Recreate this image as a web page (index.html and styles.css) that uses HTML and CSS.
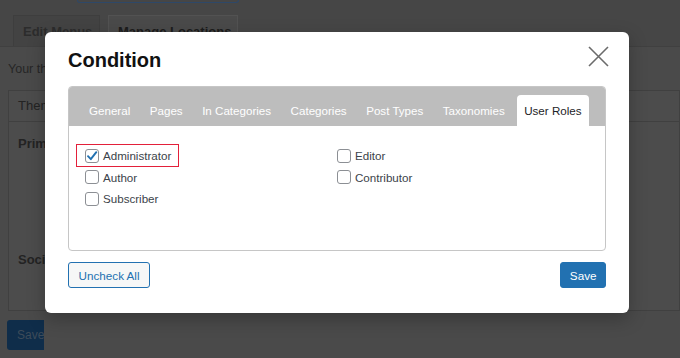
FILE: index.html
```html
<!DOCTYPE html>
<html lang="en">
  <head>
    <meta charset="UTF-8" />
    <meta name="viewport" content="width=device-width, initial-scale=1.0" />
    <title>Menus - Condition</title>
    <link rel="stylesheet" href="styles.css">
  </head>
  <body>
    <div class="page">
      <div class="page_top">
        <div class="top_button"></div>
        <div class="nav_tabs">
          <span class="nav_tab">Edit Menus</span>
          <span class="nav_tab nav_tab_active">Manage Locations</span>
        </div>
      </div>
      <p class="page_intro">Your theme supports 2 menus.</p>
      <div class="locations">
        <div class="locations_head">Theme Location</div>
        <div class="locations_body">
          <div class="location_name">Primary</div>
          <div class="location_name">Social Menu</div>
        </div>
      </div>
      <button class="page_save">Save</button>
    </div>

    <div class="modal">
      <div class="modal_head">
        <h2>Condition</h2>
        <button class="modal_close" aria-label="Close">
          <svg width="21" height="21" viewBox="0 0 21 21">
            <path d="M1 1 L20 20 M20 1 L1 20" stroke="#6b6b6b" stroke-width="1.6" fill="none" />
          </svg>
        </button>
      </div>

      <div class="tabs_box">
        <ul class="tabs">
          <li>General</li>
          <li>Pages</li>
          <li>In Categories</li>
          <li>Categories</li>
          <li>Post Types</li>
          <li>Taxonomies</li>
          <li class="active">User Roles</li>
        </ul>
        <div class="tab_panel">
          <div class="roles">
            <label class="role marked">
              <span class="check checked">
                <svg width="12" height="12" viewBox="0 0 12 12">
                  <path d="M2 6.2 L4.8 9.2 L10.3 2.2" stroke="#2271b1" stroke-width="1.9" fill="none" stroke-linecap="round" stroke-linejoin="round" />
                </svg>
              </span>
              Administrator
              <span class="highlight"></span>
            </label>
            <label class="role"><span class="check"></span>Editor</label>
            <label class="role"><span class="check"></span>Author</label>
            <label class="role"><span class="check"></span>Contributor</label>
            <label class="role"><span class="check"></span>Subscriber</label>
          </div>
        </div>
      </div>

      <div class="modal_foot">
        <button class="btn btn_secondary">Uncheck All</button>
        <button class="btn btn_primary">Save</button>
      </div>
    </div>
  </body>
</html>
```

FILE: styles.css
```css
body {
  margin: 0;
  font-family: "Liberation Sans", Arial, sans-serif;
  background-color: #4a4a4a;
  overflow: hidden;
}

/* dimmed admin page behind the dialog */
.page_top {
  height: 46px;
  background-color: #464646;
  border-bottom: 1px solid #404040;
}
.top_button {
  margin-left: 77px;
  width: 160px;
  height: 2px;
  border: 1px solid #2e4868;
  border-top: none;
  border-radius: 0 0 4px 4px;
}
.nav_tabs {
  display: flex;
  gap: 8px;
  padding-left: 13px;
  margin-top: 12px;
}
.nav_tab {
  height: 31px;
  line-height: 31px;
  padding: 0 9px;
  box-sizing: border-box;
  font-size: 13px;
  font-weight: bold;
  color: #2c2c2c;
  background-color: #434343;
  border: 1px solid #3e3e3e;
  border-bottom: none;
  width: 87px;
  white-space: nowrap;
  overflow: hidden;
}
.nav_tab_active {
  width: 130px;
  color: #1c1c1c;
  background-color: #4a4a4a;
  border-color: #525252;
  height: 32px;
}
.page_intro {
  margin: 15px 0 0 8px;
  font-size: 12.5px;
  color: #262626;
}
.locations {
  margin: 14px 0 0 8px;
  border: 1px solid #404040;
  background-color: #4c4c4c;
}
.locations_head {
  height: 30px;
  line-height: 30px;
  padding-left: 9px;
  font-size: 13px;
  color: #232323;
  border-bottom: 1px solid #404040;
}
.locations_body {
  height: 188px;
  padding: 14px 9px 0;
  box-sizing: border-box;
}
.location_name {
  font-size: 13px;
  font-weight: bold;
  color: #232323;
  height: 116px;
}
.page_save {
  display: block;
  margin: 9px 0 0 7px;
  width: 37px;
  height: 30px;
  border: none;
  border-radius: 3px 0 0 3px;
  background-color: #0f2d4a;
  color: #3d4b59;
  font-family: inherit;
  font-size: 12px;
  text-align: left;
  padding: 0 0 0 10px;
}

/* dialog */
.modal {
  position: absolute;
  left: 45px;
  top: 32px;
  width: 584px;
  height: 281px;
  box-sizing: border-box;
  padding: 16px 23px 0;
  background: #fff;
  border-radius: 6px;
  box-shadow: 0 6px 18px rgba(0, 0, 0, 0.25);
}
.modal_head {
  position: relative;
  height: 24px;
  margin-bottom: 14px;
}
.modal_head h2 {
  margin: 0;
  font-size: 20px;
  line-height: 24px;
  font-weight: bold;
  color: #111;
}
.modal_close {
  position: absolute;
  right: -3px;
  top: -2px;
  width: 21px;
  height: 21px;
  padding: 0;
  border: none;
  background: none;
  cursor: pointer;
}

.tabs_box {
  border: 1px solid #c6c6c6;
  border-radius: 4px;
  overflow: hidden;
}
.tabs {
  display: flex;
  margin: 0;
  padding: 8px 0 0 12.5px;
  list-style: none;
  background-color: #bdbdbd;
  height: 39px;
  box-sizing: border-box;
}
.tabs li {
  height: 31px;
  line-height: 32px;
  padding: 0 7.5px;
  margin-right: 4.5px;
  font-size: 11.6px;
  color: #fff;
  white-space: nowrap;
}
.tabs li.active {
  background: #fff;
  color: #1d2327;
  border-radius: 4px 4px 0 0;
}
.tab_panel {
  height: 124px;
  box-sizing: border-box;
  padding: 19px 16px 0;
}
.roles {
  display: grid;
  grid-template-columns: 1fr 1fr;
  grid-auto-rows: 21.5px;
}
.role {
  position: relative;
  display: flex;
  align-items: center;
  font-size: 11.6px;
  color: #3c434a;
  align-self: start;
  height: 21.5px;
}
.check {
  display: inline-flex;
  align-items: center;
  justify-content: center;
  width: 14px;
  height: 14px;
  box-sizing: border-box;
  border: 1px solid #8c8f94;
  border-radius: 3px;
  margin-right: 4px;
}
.highlight {
  position: absolute;
  left: -9px;
  top: -1.5px;
  width: 103px;
  height: 23.5px;
  box-sizing: border-box;
  border: 1.5px solid #e3203a;
}

.modal_foot {
  display: flex;
  justify-content: space-between;
  margin-top: 11px;
}
.btn {
  height: 26px;
  padding: 0 9.5px;
  border-radius: 3px;
  font-family: inherit;
  font-size: 11.7px;
  cursor: pointer;
}
.btn_secondary {
  background-color: #f6f7f7;
  border: 1px solid #2271b1;
  color: #2271b1;
}
.btn_primary {
  padding: 0 8.5px;
  background-color: #2271b1;
  border: 1px solid #2271b1;
  color: #fff;
}
```
